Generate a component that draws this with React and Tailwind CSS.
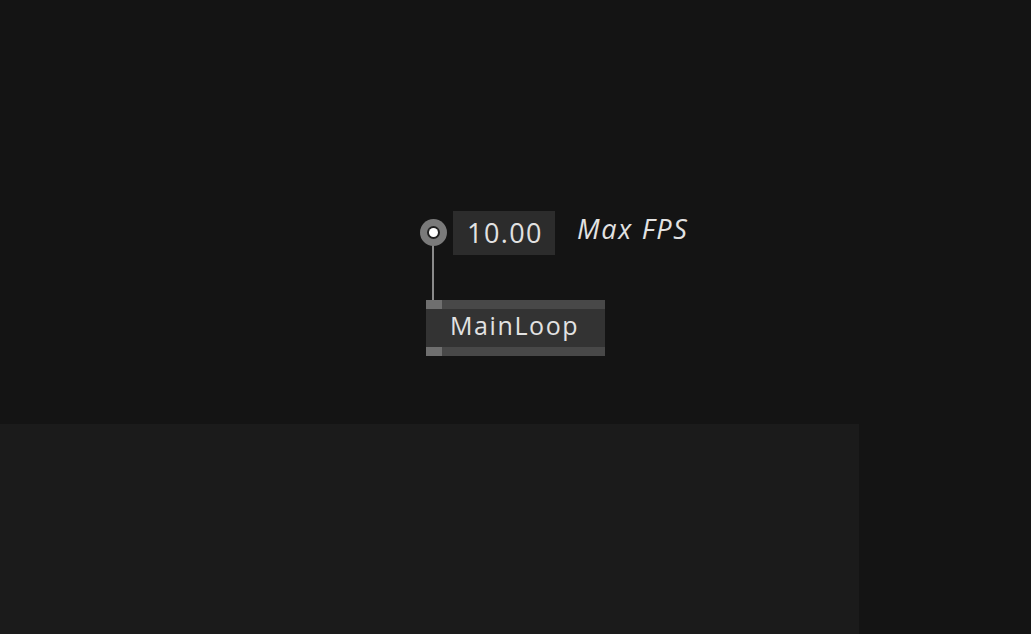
const FONT = { fontFamily: '"Open Sans", "Noto Sans", sans-serif' };

function Port({ className }) {
  return <div className={`absolute w-[16px] h-[9px] bg-[#6f6f6f] ${className}`} />;
}

function InletKnob() {
  return (
    <div className="absolute left-[420px] top-[219px] w-[27px] h-[27px] rounded-full bg-[#7a7a7a] flex items-center justify-center">
      <div className="w-[13px] h-[13px] rounded-full bg-[#222] flex items-center justify-center">
        <div className="w-[9px] h-[9px] rounded-full bg-white" />
      </div>
    </div>
  );
}

export default function App() {
  return (
    <div className="w-[1031px] h-[634px] bg-[#141414] flex flex-col overflow-hidden" style={FONT}>
      {/* patch canvas */}
      <div className="relative h-[424px] shrink-0">
        {/* wire from number box to node inlet */}
        <div className="absolute left-[432px] top-[240px] w-[2px] h-[62px] bg-[#8a8a8a]" />
        <InletKnob />

        <div className="absolute left-[453px] top-[211px] w-[102px] h-[44px] bg-[#2c2c2c] flex items-center justify-center pb-[2px] pl-[2px] text-[27px] leading-none text-[#e2e2e2] tracking-[1.4px]">
          10.00
        </div>
        <div className="absolute left-[577px] top-[211px] text-[27px] italic leading-[36px] tracking-[1.7px] text-[#e2e2e2]">
          Max FPS
        </div>

        {/* MainLoop node */}
        <div className="absolute left-[426px] top-[300px] w-[179px] flex flex-col">
          <div className="relative h-[9px] bg-[#484848]">
            <Port className="left-0 top-0" />
          </div>
          <div className="h-[38px] bg-[#333333] flex items-center pl-[24px] pb-[6px] text-[25px] leading-none tracking-[1.6px] text-[#e2e2e2]">
            MainLoop
          </div>
          <div className="relative h-[9px] bg-[#484848]">
            <Port className="left-0 top-0" />
          </div>
        </div>
      </div>

      {/* lower panel */}
      <div className="flex flex-1">
        <div className="w-[859px] bg-[#1b1b1b]" />
        <div className="flex-1" />
      </div>
    </div>
  );
}
